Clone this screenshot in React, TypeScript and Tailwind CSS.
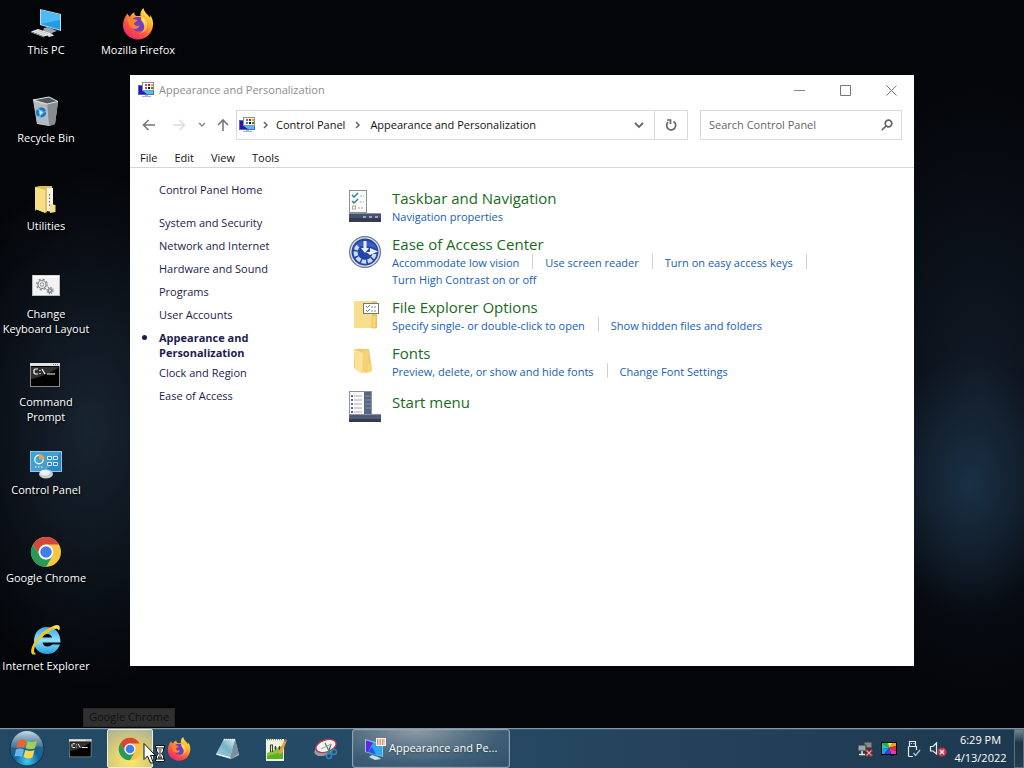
import type { ReactNode } from "react";

type IconProps = { className?: string };

function ChromeIcon({ className = "size-8" }: IconProps) {
  return (
    <svg viewBox="0 0 32 32" className={className} aria-hidden="true">
      <circle cx="16" cy="16" r="15" fill="#f6c643" />
      <path d="M3 8.500A15 15 0 0 1 29 8.500H16A7.500 7.500 0 0 0 9.500 19.700Z" fill="#d5473b" />
      <path d="M3 8.500L9.500 19.750A7.500 7.500 0 0 0 22.500 19.750L16 31A15 15 0 0 1 3 8.500Z" fill="#249b59" />
      <circle cx="16" cy="16" r="7.400" fill="#f5f7fa" />
      <circle cx="16" cy="16" r="5.700" fill="#3f7fea" />
    </svg>
  );
}

function FirefoxIcon({ className = "size-8" }: IconProps) {
  return (
    <svg viewBox="0 0 32 32" className={className} aria-hidden="true">
      <defs>
        <linearGradient id="ffBody" x1="0.85" y1="0.05" x2="0.25" y2="0.95">
          <stop offset="0" stopColor="#fff04f" />
          <stop offset="0.35" stopColor="#ffb02e" />
          <stop offset="0.65" stopColor="#ff5a3c" />
          <stop offset="1" stopColor="#ef2a68" />
        </linearGradient>
        <linearGradient id="ffTail" x1="0.5" y1="0" x2="0.5" y2="1">
          <stop offset="0" stopColor="#fff35a" />
          <stop offset="1" stopColor="#ff9640" />
        </linearGradient>
      </defs>
      <path d="M5.500 5.500C6 7 7 8 8 8.800C9 6.500 10.500 5 12.500 4.500C12 6 13 7.500 14.500 8L18.500 8C18 5 19 2 21.500 0C22 4 26 6.500 28 9.500C28.300 8.800 28.500 8 28.400 7C30.500 10.500 31.500 14 31 17.500C30 26 23.500 31.500 16 31.500C7.500 31.500 1 25 1 17C1 12.500 3 8.500 5.500 5.500Z" fill="url(#ffBody)" />
      <path d="M11 10.500C14 8.500 19 8.500 21.500 11C24.500 14 24.500 19 21.500 22C18.500 24.500 13.500 24 11 21C9.500 19 9 16 9.800 14Z" fill="#7040bf" />
      <path d="M19.500 9C23.500 10.500 26 14.500 25 19C24 23.500 20 26 16 25.500C21 25 23 21 22 17C21.200 13.500 18 13 19.500 9Z" fill="url(#ffTail)" />
      <path d="M5.500 9.500C8 11 12 10.500 15.500 12C14.500 14 12.500 14 12 15.500C12.500 18 15 18.500 17.500 17.500C16.500 21 12 22 9 19.500C6.500 17 5.500 12.500 5.500 9.500Z" fill="#ff8235" />
    </svg>
  );
}

function InternetExplorerIcon() {
  return (
    <svg viewBox="0 0 32 32" className="size-8" aria-hidden="true">
      <defs>
        <linearGradient id="ieBlue" x1="0" y1="0" x2="0" y2="1">
          <stop offset="0" stopColor="#3aa9e0" />
          <stop offset="0.5" stopColor="#8ee0ff" />
          <stop offset="1" stopColor="#279fdc" />
        </linearGradient>
      </defs>
      <path fillRule="evenodd" d="M16.500 3C25 3 30.500 8.500 30.500 18.500H12.500C13 21 14.800 22.500 17.500 22.500C19.800 22.500 21.200 21.700 22 20.500H30C27.500 27 23 30 17 30C9 30 4 24.500 4 17C4 8.500 9.500 3 16.500 3ZM12.500 13.500H22C21.500 11.300 19.800 10 17.200 10C14.500 10 12.900 11.300 12.500 13.500Z" fill="url(#ieBlue)" />
      <path d="M6 30C2 32-.2 29 2 23C5 15 14 5 23.500 2C28 .5 31 1.500 29 6.500C28.200 4.500 26.500 4.300 23.500 5.500C15 9 7.500 16.500 4.800 23C3.500 26.500 3.800 28.800 6 30Z" fill="#f3c52b" />
      <path d="M23.500 2C28 .5 31 1.500 29 6.500C28.500 5 27 3.500 23.500 4Z" fill="#ffe56a" />
    </svg>
  );
}

function ThisPcIcon() {
  return (
    <svg viewBox="0 0 32 32" className="size-8" aria-hidden="true">
      <path d="M10 1L31 6V23L10 17Z" fill="#b9dcf2" />
      <path d="M11 2.300L30 6.800V21.700L11 16.300Z" fill="#249be6" />
      <path d="M11 2.300L30 6.800V12L11 16Z" fill="#4ebaf4" />
      <path d="M14 20L18 19L27 23L19 26L13 23Z" fill="#9aa6af" />
      <path d="M1 23.500L8 21L23 26L14 28.500Z" fill="#e5e9ec" />
      <path d="M1 23.500L14 28.500V29.500L1 24.500Z" fill="#8f989e" />
      <path d="M17 27.500L22 26L24 27.500L19 29Z" fill="#dfe3e6" />
      <path d="M5 23.500L15 26.700M8 22.500L18 25.700" stroke="#b2b9be" strokeWidth=".7" />
    </svg>
  );
}

function RecycleBinIcon() {
  return (
    <svg viewBox="0 0 32 32" className="size-8" aria-hidden="true">
      <path d="M3 4L20 1L28 6L25 28L19 30L7 28Z" fill="#c2c7cb" />
      <path d="M17 7L28 6L25 28L19 30Z" fill="#858c92" />
      <path d="M3 4L19 1L28 5.500L17 8Z" fill="#53595e" stroke="#dfe4e7" strokeWidth="1" />
      <path d="M4 6L17 9L18 29L7 27Z" fill="#b3babf" />
      <circle cx="11" cy="16.500" r="5" fill="#5faee4" />
      <circle cx="11" cy="16.500" r="3.800" fill="none" stroke="#1477c8" strokeWidth="2.600" strokeDasharray="6 2" />
      <path d="M9.500 14L13 16.500L10 19Z" fill="#dcecf7" />
    </svg>
  );
}

function UtilitiesIcon() {
  return (
    <svg viewBox="0 0 32 32" className="size-8" aria-hidden="true">
      <path d="M5 3L10 2H22V24H8L5 27Z" fill="#e0be59" />
      <path d="M17 4H23V28L17 27Z" fill="#f7f4ec" />
      <path d="M19.500 10V24" stroke="#7e6553" strokeWidth="1.200" strokeDasharray="1.500 2" />
      <path d="M20 20L25.500 21V28L20 29Z" fill="#f6df8a" />
      <path d="M5 3L15 6V29L5 25Z" fill="#f8df86" />
      <path d="M15 6L17 7V28L15 29Z" fill="#e4c263" />
    </svg>
  );
}

function GearsIcon() {
  return (
    <svg viewBox="0 0 32 32" className="size-8" aria-hidden="true">
      <rect x="2.500" y="3.500" width="27" height="20" fill="#f3f3f3" stroke="#b7b9bc" />
      <path d="M3 4.500H29" stroke="#fff" strokeWidth="2" />
      <g fill="none" stroke="#85898d">
        <circle cx="12" cy="12.500" r="4" strokeWidth="1.200" />
        <circle cx="12" cy="12.500" r="5.300" strokeWidth="1.300" strokeDasharray="2.100 2.060" />
        <circle cx="12" cy="12.500" r="1.800" />
        <circle cx="20" cy="18.500" r="1.800" strokeWidth="1.600" />
        <circle cx="20" cy="18.500" r="3.200" strokeWidth="1.200" strokeDasharray="1.400 1.110" />
      </g>
    </svg>
  );
}

function CommandIcon({ className = "size-8" }: IconProps) {
  return (
    <svg viewBox="0 0 32 32" className={className} aria-hidden="true">
      <rect x=".5" y="3.500" width="29" height="23" fill="#020202" stroke="#8b8b8b" />
      <path d="M1 7V19C7 18 20 14 29 7Z" fill="#303030" />
      <path d="M0 4.500H30" stroke="#e1e3e4" strokeWidth="3" />
      <path d="M23 4.500H28" stroke="#68849d" strokeDasharray="1 1" />
      <path d="M8 9H5L4 10V13L5 14H8M10 10V11M10 13V14M12 9L15 14M17 14H25" fill="none" stroke="#fff" strokeWidth="1.200" />
    </svg>
  );
}

function ControlPanelIcon() {
  return (
    <svg viewBox="0 0 32 32" className="size-8" aria-hidden="true">
      <rect x=".5" y="3.500" width="31" height="20" fill="#2a87c5" stroke="#8bc7ec" />
      <path d="M1 4H31L16 23H1Z" fill="#419fd6" />
      <circle cx="9" cy="11.500" r="4.200" fill="none" stroke="#e7f4fc" strokeWidth="1.400" />
      <path d="M9 11.500V6A5.500 5.500 0 0 1 14.500 11.500Z" fill="#f1a13a" />
      <path d="M17.500 8.500H21.500V11.500H17.500ZM23.500 8.500H27.500V11.500H23.500ZM17.500 14.500H21.500V17.500H17.500ZM23.500 14.500H27.500V17.500H23.500Z" fill="#297fb9" stroke="#d6ecfa" />
      <path d="M5 19H13" stroke="#f4d18a" strokeWidth="1.300" strokeDasharray="1.500 1.500" />
      <ellipse cx="16" cy="26" rx="7" ry="4.500" fill="#c5cbcf" />
      <ellipse cx="15" cy="24.700" rx="5" ry="2.700" fill="#edf0f1" />
    </svg>
  );
}

function PersonalizationIcon({ className = "size-4" }: IconProps) {
  return (
    <svg viewBox="0 0 16 16" className={className} aria-hidden="true">
      <rect x=".5" y="3.500" width="15" height="9" fill="#35a5e8" stroke="#5868ad" />
      <path d="M1 4H5V9L10 12H1Z" fill="#2418bc" />
      <path d="M5 9H15V12H9Z" fill="#49c2f7" />
      <rect x="4.500" y=".5" width="11" height="8" fill="#faf8ef" stroke="#8f9299" />
      <path d="M7 2H9V4H7ZM7 5H9V7H7Z" fill="#6270b8" />
      <path d="M10 2H12V4H10Z" fill="#a42b25" />
      <path d="M13 2H15V4H13Z" fill="#e4a51c" />
      <path d="M10 5H12V7H10Z" fill="#15130f" />
      <path d="M13 5H15V7H13Z" fill="#6e6432" />
      <path d="M7 13H10V14H13V15H4V14H7Z" fill="#a6b3c0" />
    </svg>
  );
}

function TaskbarPersonalizationIcon() {
  return (
    <svg viewBox="0 0 24 24" className="size-6" aria-hidden="true">
      <path d="M2 2L20 7V20L2 15Z" fill="#7fc8ef" />
      <path d="M3 3.500L19 8V19L3 14.500Z" fill="#30a5f2" />
      <path d="M3 3.500L10 5.500L5 15L3 14.500Z" fill="#6d22e0" />
      <path d="M5 15L9 10L13 17.500Z" fill="#2455df" />
      <path d="M9 18L15 20L18 22L12 23L6 20Z" fill="#c8e2ed" />
      <rect x="13" y="1" width="10" height="8" fill="#fff7ed" />
      <path d="M14 3H22M14 5H22M14 7H22" stroke="#a5372c" strokeDasharray="1.500 1" />
      <path d="M17 3H22M17 7H19" stroke="#e4af2c" strokeDasharray="1.500 1" />
    </svg>
  );
}

function TaskbarSettingsIcon() {
  return (
    <svg viewBox="0 0 32 32" className="size-8" aria-hidden="true">
      <rect x=".5" y=".5" width="17" height="22" fill="#fbfbfb" stroke="#8f8f8f" />
      <path d="M3 5L5 7L9 3M3 11L5 13L9 9" fill="none" stroke="#1d8995" strokeWidth="1.500" />
      <path d="M11 6H15M11 12H15M9 18H14" stroke="#a9adad" strokeDasharray="2 1" />
      <rect x="3.500" y="16" width="3" height="3" fill="none" stroke="#b1a99b" />
      <rect y="23" width="32" height="9" fill="#47506c" />
      <path d="M0 23.500H32" stroke="#8b91a3" />
      <path d="M0 28H32V32H0Z" fill="#343b52" />
      <path d="M14 26H17V28H14ZM20 26H23V28H20ZM26 26H29V28H26Z" fill="#9da8b9" />
    </svg>
  );
}

function EaseOfAccessIcon() {
  return (
    <svg viewBox="0 0 32 32" className="size-8" aria-hidden="true">
      <circle cx="16" cy="16" r="16" fill="#69788e" />
      <circle cx="16" cy="16" r="14.800" fill="#dce1e7" />
      <circle cx="16" cy="16" r="13.500" fill="#2445a8" />
      <path d="M4 13A13 13 0 0 1 28 13C20 9 10 9 4 13Z" fill="#3c60bd" />
      <path d="M25.500 18A9.500 9.500 0 1 1 9 10" fill="none" stroke="#cddcf2" strokeWidth="4" strokeDasharray="4.500 1.500" />
      <path d="M16 5V15" stroke="#e9f1fa" strokeWidth="3" />
      <path d="M12 12H20L16 17ZM17 16L21 16L21 12L29 15.500L21 19Z" fill="#edf4fa" />
    </svg>
  );
}

function ExplorerOptionsIcon() {
  return (
    <svg viewBox="0 0 32 32" className="size-8" aria-hidden="true">
      <path d="M5 2H28V29H5Z" fill="#ecc969" />
      <path d="M5 2H23V29H5Z" fill="#f8df8d" />
      <rect x="14.500" y="4.500" width="15" height="10" fill="#fff" stroke="#777" />
      <path d="M17 7L18.500 8.500L21 6M17 11L18.500 12.500L21 10" fill="none" stroke="#4c858c" />
      <path d="M22 8H27M22 12H27" stroke="#888" strokeDasharray="2 1" />
      <path d="M23 17L27 16V29H23Z" fill="#f7d876" stroke="#d9b655" strokeWidth=".6" />
    </svg>
  );
}

function FontsIcon() {
  return (
    <svg viewBox="0 0 32 32" className="size-8" aria-hidden="true">
      <path d="M5 4H20L22 18L23 26L17 28L5 23Z" fill="#edc666" />
      <path d="M13 5H20V25L13 28Z" fill="#f5d07a" />
      <path d="M5 4L14 8L13 29L6 24Z" fill="#ffe294" />
      <path d="M20 18L23 20V26L18 27Z" fill="#f8d77e" />
    </svg>
  );
}

function StartMenuIcon() {
  return (
    <svg viewBox="0 0 32 32" className="size-8" aria-hidden="true">
      <rect x=".5" y=".5" width="22" height="23" fill="#566584" stroke="#8993a7" />
      <rect x="1" y="1" width="14" height="22" fill="#fafafa" />
      <path d="M2 5H4M2 9H4M2 13H4M2 17H4M2 21H4" stroke="#353b51" strokeWidth="1.300" />
      <path d="M5 5H13M5 9H13M5 13H13M5 17H13M5 21H13" stroke="#a6acb7" />
      <path d="M16 5H22M16 9H22M16 13H22M16 17H22" stroke="#8390ac" />
      <rect y="23" width="32" height="8" fill="#505a75" />
      <path d="M0 23.500H32" stroke="#8b91a3" />
      <path d="M0 28H32V31H0Z" fill="#343b52" />
    </svg>
  );
}

function StartOrb() {
  return (
    <svg viewBox="0 0 36 36" className="size-9" aria-hidden="true">
      <defs>
        <radialGradient id="orb" cx=".5" cy=".85" r=".8">
          <stop offset="0" stopColor="#42cdf5" />
          <stop offset=".45" stopColor="#12629a" />
          <stop offset="1" stopColor="#3c6078" />
        </radialGradient>
        <linearGradient id="orbShine" x1="0" y1="0" x2="0" y2="1">
          <stop offset="0" stopColor="#c9dde8" />
          <stop offset="1" stopColor="#5687a3" stopOpacity=".5" />
        </linearGradient>
      </defs>
      <circle cx="18" cy="18" r="17" fill="url(#orb)" stroke="#12324c" />
      <path d="M2 16A16 16 0 0 1 34 16C26 13 12 20 2 16Z" fill="url(#orbShine)" />
      <path d="M9.500 9.500C12 8 14.500 8 17 9.500L15.200 17C12.500 15.700 10 15.700 7.500 17Z" fill="#f0642b" />
      <path d="M18.500 10C21 11.500 24 11.500 28 10L26 17.200C23 18.500 20 18.500 16.700 17.200Z" fill="#a5cf4f" />
      <path d="M7 18.500C10 17 12.500 17 15 18.500L13 26C10.500 24.800 8 24.500 5.500 25.500Z" fill="#65b7eb" />
      <path d="M16.300 19C19.500 20.300 22.500 20.300 25.500 19L23.500 26.500C20.500 28 17.500 27.500 14.500 26Z" fill="#f8d84a" />
    </svg>
  );
}

function NotepadIcon() {
  return (
    <svg viewBox="0 0 24 24" className="size-6" aria-hidden="true">
      <defs>
        <linearGradient id="note" x1="1" y1="0" x2="0" y2="1">
          <stop offset="0" stopColor="#e2eff1" />
          <stop offset=".45" stopColor="#77b3c4" />
          <stop offset="1" stopColor="#a1d2dd" />
        </linearGradient>
      </defs>
      <path d="M8 2H19L23 18L15 22L1 18Z" fill="#d9e2e2" />
      <path d="M19 2L23 17L15 22L14 20Z" fill="#79919a" />
      <path d="M8 2H19L14 20L0 17Z" fill="url(#note)" />
      <path d="M8 2.500H19" stroke="#edf4f6" strokeWidth="1.500" strokeDasharray="1 1" />
      <path d="M0 17L14 20.500" stroke="#e9f6fa" />
    </svg>
  );
}

function NotepadPlusIcon() {
  return (
    <svg viewBox="0 0 24 24" className="size-6" aria-hidden="true">
      <path d="M1 2H19V24H1Z" fill="#f1f3df" />
      <path d="M2 16C8 13 13 12 18 8V22H2Z" fill="#87c637" />
      <path d="M2 19L18 15V22H2Z" fill="#5cad27" />
      <path d="M2 2.500H18" stroke="#777e6b" strokeWidth="1.500" strokeDasharray="1 1" />
      <path d="M5.500 15V8H7.500V15M9 11H12M10.500 9V13M13 11H16M14.500 9V13" fill="none" stroke="#36453a" strokeWidth="1.100" />
      <path d="M20 2L22 3L17 16L14 18V14Z" fill="#e7a33a" />
      <path d="M20 2L22 3L21 5L19 4Z" fill="#6e7577" />
    </svg>
  );
}

function SnippingIcon() {
  return (
    <svg viewBox="0 0 24 24" className="size-6" aria-hidden="true">
      <ellipse cx="10" cy="13" rx="10" ry="5.500" transform="rotate(-18 10 13)" fill="#929fab" />
      <ellipse cx="12" cy="9" rx="10.500" ry="6" transform="rotate(-18 12 9)" fill="#f6f4f2" stroke="#c5374c" strokeWidth="1.400" />
      <path d="M11 6L16 16M17 7L14 17" stroke="#448864" strokeWidth="1.300" />
      <path d="M7 12L17 7" stroke="#8fafa7" />
      <circle cx="15" cy="19" r="2.500" fill="none" stroke="#2d87c4" strokeWidth="1.500" />
      <circle cx="20" cy="15" r="2.500" fill="none" stroke="#2d87c4" strokeWidth="1.500" />
    </svg>
  );
}

function NetworkIcon() {
  return (
    <svg viewBox="0 0 16 16" className="size-4" aria-hidden="true">
      <path d="M7 1H15V7H7Z" fill="#7f8c94" stroke="#30363a" />
      <path d="M1 4H9V10H1Z" fill="#9ba4a8" stroke="#30363a" />
      <path d="M5 10V13M2 13.500H8" stroke="#e6eaeb" strokeWidth="1.500" />
      <path d="M9 9L15 15M15 9L9 15" stroke="#dc4942" strokeWidth="2.400" />
      <path d="M10 10L14 14M14 10L10 14" stroke="#ffd7d1" strokeWidth=".6" />
    </svg>
  );
}

function DisplayColorsIcon() {
  return (
    <svg viewBox="0 0 16 16" className="size-4" aria-hidden="true">
      <path d="M0 1H16V14H0Z" fill="#090b0d" />
      <path d="M8 7L1 2H7Z" fill="#16c52b" />
      <path d="M8 7L7 2H12Z" fill="#efe84b" />
      <path d="M8 7L12 2H15V5Z" fill="#ff9b20" />
      <path d="M8 7L15 5V10Z" fill="#ef2e23" />
      <path d="M8 7L15 10V13H10Z" fill="#dd39b8" />
      <path d="M8 7L10 13H3Z" fill="#3841df" />
      <path d="M8 7L3 13H1V8Z" fill="#249cec" />
      <path d="M8 7L1 8V2Z" fill="#25c7b4" />
      <path d="M10 13H13V15H10Z" fill="#10161b" />
    </svg>
  );
}

function UsbIcon() {
  return (
    <svg viewBox="0 0 16 18" className="h-[18px] w-4" fill="none" stroke="#e3e9ed" aria-hidden="true">
      <path d="M4.500 6V1.500H10.500V6M3.500 6.500H11.500V10M3.500 6.500V15.500L4 16.500H8M6 3.500H7M8.500 3.500H9.500" strokeWidth="1.200" />
      <path d="M8.500 13L10.500 15.500L15 10" stroke="#a9c3d2" strokeWidth="1.300" />
    </svg>
  );
}

function MutedIcon() {
  return (
    <svg viewBox="0 0 18 16" className="h-4 w-[18px]" fill="none" aria-hidden="true">
      <path d="M1.500 5.500H4L7.500 2V13L4 10H1.500Z" stroke="#e7edf1" strokeWidth="1.200" />
      <circle cx="13" cy="11" r="4.500" fill="#cc3447" />
      <path d="M11 9L15 13M15 9L11 13" stroke="#fff" strokeWidth="1.300" />
    </svg>
  );
}

function DesktopItem({ label, icon }: { label: string; icon: ReactNode }) {
  return (
    <button type="button" className="flex h-22 w-23 flex-col items-center gap-[2px]">
      {icon}
      <span className="max-w-full text-center text-[11px] leading-[15px] whitespace-pre text-white [text-shadow:1px_1px_2px_#000]">{label}</span>
    </button>
  );
}

const desktopItems = [
  { label: "This PC", icon: <ThisPcIcon /> },
  { label: "Recycle Bin", icon: <RecycleBinIcon /> },
  { label: "Utilities", icon: <UtilitiesIcon /> },
  { label: "Change\nKeyboard Layout", icon: <GearsIcon /> },
  { label: "Command\nPrompt", icon: <CommandIcon /> },
  { label: "Control Panel", icon: <ControlPanelIcon /> },
  { label: "Google Chrome", icon: <ChromeIcon /> },
  { label: "Internet Explorer", icon: <InternetExplorerIcon /> },
  { label: "Mozilla Firefox", icon: <FirefoxIcon /> },
];

const categories = [
  "System and Security",
  "Network and Internet",
  "Hardware and Sound",
  "Programs",
  "User Accounts",
  "Appearance and Personalization",
  "Clock and Region",
  "Ease of Access",
];

const sections = [
  { title: "Taskbar and Navigation", icon: <TaskbarSettingsIcon />, links: ["Navigation properties"] },
  {
    title: "Ease of Access Center",
    icon: <EaseOfAccessIcon />,
    links: ["Accommodate low vision", "Use screen reader", "Turn on easy access keys", "Turn High Contrast on or off"],
  },
  {
    title: "File Explorer Options",
    icon: <ExplorerOptionsIcon />,
    links: ["Specify single- or double-click to open", "Show hidden files and folders"],
  },
  { title: "Fonts", icon: <FontsIcon />, links: ["Preview, delete, or show and hide fonts", "Change Font Settings"] },
  { title: "Start menu", icon: <StartMenuIcon />, links: [] },
];

function TitleBar() {
  return (
    <header className="flex h-[30px] shrink-0 items-center pl-2">
      <PersonalizationIcon />
      <h1 className="flex-1 pl-[5px] text-[11px] text-[#8c8c8c]">Appearance and Personalization</h1>
      <button type="button" aria-label="Minimize" className="flex h-full w-[46px] items-center justify-center">
        <svg viewBox="0 0 11 11" className="size-[11px]" stroke="#888" aria-hidden="true"><path d="M0 5.500H11" /></svg>
      </button>
      <button type="button" aria-label="Maximize" className="flex h-full w-[46px] items-center justify-center">
        <svg viewBox="0 0 11 11" className="size-[11px]" fill="none" stroke="#777" aria-hidden="true"><path d="M.5 .5H10.500V10.500H.5Z" /></svg>
      </button>
      <button type="button" aria-label="Close" className="flex h-full w-[46px] items-center justify-center">
        <svg viewBox="0 0 11 11" className="size-[11px]" stroke="#777" aria-hidden="true"><path d="M.5 .5L10.500 10.500M10.500 .5L.5 10.500" /></svg>
      </button>
    </header>
  );
}

function Crumb() {
  return (
    <svg viewBox="0 0 6 8" className="h-2 w-[6px]" fill="none" stroke="#666" strokeWidth="1.500" aria-hidden="true"><path d="M1 1L4 4L1 7" /></svg>
  );
}

function NavigationBar() {
  return (
    <div className="flex h-10 shrink-0 items-center pr-3 pl-3">
      <nav aria-label="History" className="flex h-full w-[94px] shrink-0 items-center">
        <button type="button" aria-label="Back" className="w-[30px]">
          <svg viewBox="0 0 14 12" className="h-3 w-[14px]" fill="none" stroke="#777" strokeWidth="1.600" aria-hidden="true"><path d="M13 6H2M6.500 1L1.500 6L6.500 11" /></svg>
        </button>
        <button type="button" aria-label="Forward" className="w-[26px]" disabled>
          <svg viewBox="0 0 14 12" className="h-3 w-[14px]" fill="none" stroke="#dcdcdc" strokeWidth="1.500" aria-hidden="true"><path d="M1 6H12M7.500 1L12.500 6L7.500 11" /></svg>
        </button>
        <button type="button" aria-label="Recent locations" className="w-[19px]">
          <svg viewBox="0 0 8 6" className="h-[6px] w-2" fill="none" stroke="#888" strokeWidth="1.400" aria-hidden="true"><path d="M1 1L4 4L7 1" /></svg>
        </button>
        <button type="button" aria-label="Up" className="w-[14px]">
          <svg viewBox="0 0 12 14" className="h-[14px] w-3" fill="none" stroke="#777" strokeWidth="1.600" aria-hidden="true"><path d="M6 13V2M1 7L6 2L11 7" /></svg>
        </button>
      </nav>
      <div className="flex h-[30px] flex-1 items-center border border-[#d9d9d9] pl-[2px] text-[11px] text-[#111]">
        <PersonalizationIcon />
        <span className="flex w-[21px] justify-center"><Crumb /></span>
        <a href="#control-panel">Control Panel</a>
        <span className="flex w-[25px] justify-center"><Crumb /></span>
        <a href="#appearance">Appearance and Personalization</a>
        <button type="button" aria-label="Previous locations" className="ml-auto flex h-full w-[30px] items-center justify-center">
          <svg viewBox="0 0 10 7" className="h-[7px] w-[10px]" fill="none" stroke="#666" strokeWidth="1.800" aria-hidden="true"><path d="M1 1L5 5L9 1" /></svg>
        </button>
        <button type="button" aria-label="Refresh" className="flex h-full w-[33px] items-center justify-center border-l border-[#d9d9d9]">
          <svg viewBox="0 0 12 12" className="size-3" fill="none" stroke="#666" strokeWidth="1.700" aria-hidden="true"><path d="M8.500 2.500A4.500 4.500 0 1 1 3 3.200M2 1H5.500V5" /></svg>
        </button>
      </div>
      <div className="ml-3 flex h-[30px] w-[202px] items-center border border-[#d9d9d9] pr-2 pl-2">
        <input type="search" aria-label="Search Control Panel" placeholder="Search Control Panel" className="min-w-0 flex-1 bg-transparent text-[11px] text-[#333] outline-none placeholder:text-[#666] placeholder:opacity-100" />
        <svg viewBox="0 0 12 12" className="size-3" fill="none" stroke="#666" strokeWidth="1.700" aria-hidden="true"><circle cx="7.500" cy="4.500" r="3.300" /><path d="M5 7L.8 11.200" /></svg>
      </div>
    </div>
  );
}

function SectionRow({ title, icon, links }: (typeof sections)[number]) {
  return (
    <section className="flex gap-[11px] pb-[9px]">
      <div className="h-[34px] w-8 shrink-0 pt-[2px]">{icon}</div>
      <div className={links.length ? "min-w-0" : "min-w-0 pt-[3px]"}>
        <h2 className="text-[15px] leading-5 text-[#176b1c]"><a href="#section">{title}</a></h2>
        {links.length > 0 && (
          <ul className="flex flex-wrap text-[11px] leading-[17px] text-[#1460b5]">
            {links.map((link, index) => (
              <li key={link} className="flex">
                <a href="#task">{link}</a>
                {index < links.length - 1 && <span className="mr-3 ml-[13px] h-[15px] w-px bg-[#d0d0d0]" />}
              </li>
            ))}
          </ul>
        )}
      </div>
    </section>
  );
}

function ControlPanelWindow() {
  return (
    <main className="absolute top-[75px] right-[110px] bottom-[62px] left-[130px] flex flex-col bg-white">
      <TitleBar />
      <NavigationBar />
      <nav aria-label="Menu" className="flex h-[23px] shrink-0 items-center gap-[17px] border-b border-[#d5d5d5] pt-1 pl-[10px] text-[11px] text-[#111]">
        <button type="button">File</button>
        <button type="button">Edit</button>
        <button type="button">View</button>
        <button type="button">Tools</button>
      </nav>
      <div className="flex min-h-0 flex-1">
        <aside className="w-[219px] shrink-0 pt-[14px] pl-[29px] text-[11px] leading-[15px] text-[#1b1b4d]">
          <a href="#home">Control Panel Home</a>
          <ul className="mt-[18px] flex flex-col">
            {categories.map((name) =>
              name === "Appearance and Personalization" ? (
                <li key={name} className="relative mb-[5px] w-[110px] font-bold">
                  <span className="absolute top-[5px] -left-[17px] size-[5px] rounded-full bg-[#1b1b4d]" />
                  <a href="#category" aria-current="page">{name}</a>
                </li>
              ) : (
                <li key={name} className="mb-2"><a href="#category">{name}</a></li>
              ),
            )}
          </ul>
        </aside>
        <div className="min-w-0 flex-1 pt-5">
          {sections.map((section) => <SectionRow key={section.title} {...section} />)}
        </div>
      </div>
    </main>
  );
}

const pinnedApps = [
  { label: "Mozilla Firefox", icon: <FirefoxIcon className="size-6" /> },
  { label: "Notepad", icon: <NotepadIcon /> },
  { label: "Notepad++", icon: <NotepadPlusIcon /> },
  { label: "Snipping Tool", icon: <SnippingIcon /> },
];

function Pointer() {
  return (
    <svg viewBox="0 0 24 22" className="pointer-events-none absolute top-[14px] left-9 z-10 h-[22px] w-6" aria-hidden="true">
      <path d="M1 .5V16.500L4.500 13L7.500 20H10.500L7.500 12.500H12.500Z" fill="#fff" stroke="#111" />
      <path d="M12.500 2.500H21.500V5H20.500V8L18.500 10.500L20.500 13V16H21.500V18.500H12.500V16H13.500V13L15.500 10.500L13.500 8V5H12.500Z" fill="#fff" stroke="#111" />
      <path d="M13 5H21M13 16H21M15.500 7H18.500M17 8V13M15 15H19M15 14H19" stroke="#111" />
    </svg>
  );
}

function Taskbar() {
  return (
    <footer className="flex h-10 shrink-0 items-center border-t border-[#8198a9] bg-[linear-gradient(90deg,#244965_0%,#264b66_45%,#25425a_65%,#1d3950_100%)] text-white shadow-[inset_0_1px_#365a73]">
      <button type="button" aria-label="Start" className="flex h-full w-[58px] items-center pl-[9px]"><StartOrb /></button>
      <div className="flex h-full items-center gap-[3px]">
        <button type="button" aria-label="Command Prompt" className="flex h-full w-[46px] items-center justify-center"><CommandIcon className="size-6" /></button>
        <div className="relative h-full w-[46px]">
          <button type="button" aria-label="Google Chrome" className="flex size-full items-center justify-center rounded-[2px] border border-[#edf0cf] bg-[radial-gradient(circle_at_50%_85%,#ffe66a_0%,#d7cb77_55%,#aaaf9c_100%)]"><ChromeIcon className="size-6" /></button>
          <span role="tooltip" className="absolute bottom-[41px] -left-6 flex h-[19px] items-center border border-[#282828] bg-[#303030] px-[5px] text-[11px] whitespace-nowrap text-[#101010]">Google Chrome</span>
          <Pointer />
        </div>
        {pinnedApps.map(({ label, icon }) => (
          <button type="button" key={label} aria-label={label} className="flex h-full w-[46px] items-center justify-center">{icon}</button>
        ))}
        <button type="button" className="flex h-full w-[158px] items-center rounded-[3px] border border-[#8fa2af] bg-[radial-gradient(ellipse_at_40%_0%,#8e9aa3_0%,#60788a_35%,#3d5e76_65%,#315269_100%)] pl-[10px] text-[11px] shadow-[inset_0_0_1px_#bcc7ce]">
          <TaskbarPersonalizationIcon />
          <span className="truncate pl-[2px] [text-shadow:0_1px_2px_#263b49]">Appearance and Pe...</span>
        </button>
      </div>
      <div className="ml-auto flex h-full items-center">
        <div className="flex items-center gap-2">
          <NetworkIcon /><DisplayColorsIcon /><UsbIcon /><MutedIcon />
        </div>
        <time dateTime="2022-04-13T18:29" className="flex w-[67px] flex-col items-center text-[11px] leading-[18px]">
          <span>6:29 PM</span><span>4/13/2022</span>
        </time>
        <button type="button" aria-label="Show desktop" className="h-full w-[10px] border border-[#58707f] bg-[linear-gradient(#768791,#1d3544_35%,#253f50)]" />
      </div>
    </footer>
  );
}

export default function App() {
  return (
    <div className="flex h-screen flex-col overflow-hidden bg-[#030509] font-['Open_Sans','Noto_Sans',sans-serif]">
      <div className="relative min-h-0 flex-1 bg-[radial-gradient(ellipse_90px_130px_at_970px_485px,#1a3045_0%,transparent_100%),radial-gradient(ellipse_150px_260px_at_90px_430px,#182431_0%,transparent_100%),radial-gradient(ellipse_180px_320px_at_980px_390px,#111a26_0%,transparent_100%)]">
        <div className="grid h-full grid-flow-col grid-rows-[repeat(8,88px)] content-start justify-start overflow-hidden pt-2">
          {desktopItems.map((item) => <DesktopItem key={item.label} {...item} />)}
        </div>
        <ControlPanelWindow />
      </div>
      <Taskbar />
    </div>
  );
}
